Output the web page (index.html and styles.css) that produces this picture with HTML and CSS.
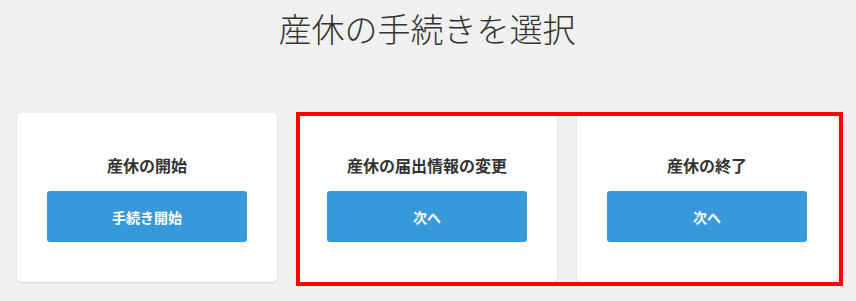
FILE: index.html
```html
<!DOCTYPE html>
<html lang="ja">
<head>
<meta charset="UTF-8" />
<meta name="viewport" content="width=device-width, initial-scale=1" />
<title>産休の手続きを選択</title>
<link rel="stylesheet" href="styles.css">
</head>
<body>

<div class="page">
  <h1 class="title">産休の手続きを選択</h1>

  <div class="cards">
    <div class="card">
      <div class="card-title">産休の開始</div>
      <button class="btn">手続き開始</button>
    </div>
    <div class="card">
      <div class="card-title">産休の届出情報の変更</div>
      <button class="btn">次へ</button>
    </div>
    <div class="card">
      <div class="card-title">産休の終了</div>
      <button class="btn">次へ</button>
    </div>
  </div>

  <div class="highlight"></div>
</div>

</body>
</html>
```

FILE: styles.css
```css
body {
  margin: 0;
  background: #f0f0f0;
  font-family: "Noto Sans CJK JP", "Noto Sans", sans-serif;
  color: #333;
}
.page {
  position: relative;
  width: 820px;
  margin-left: 17px;
  height: 301px;
}
.title {
  margin: 0;
  padding-top: 6px;
  font-size: 33px;
  font-weight: 300;
  line-height: 44px;
  text-align: center;
  color: #333;
}
.cards {
  display: flex;
  gap: 20px;
  margin-top: 63px;
}
.card {
  width: 260px;
  height: 169px;
  box-sizing: border-box;
  padding-top: 40px;
  background: #fff;
  border-radius: 5px;
  box-shadow: 0 1px 2px rgba(0, 0, 0, 0.12);
  display: flex;
  flex-direction: column;
  align-items: center;
}
.card-title {
  font-size: 16px;
  font-weight: 700;
  line-height: 24px;
  color: #333;
}
.btn {
  margin-top: 14px;
  width: 200px;
  height: 51px;
  border: none;
  border-radius: 3px;
  background: #3899da;
  color: #fff;
  font-family: inherit;
  font-size: 14px;
  font-weight: 700;
  cursor: pointer;
}
.highlight {
  position: absolute;
  left: 279px;
  top: 112px;
  width: 547px;
  height: 174px;
  box-sizing: border-box;
  border: 4px solid #ff0000;
  pointer-events: none;
}
```
